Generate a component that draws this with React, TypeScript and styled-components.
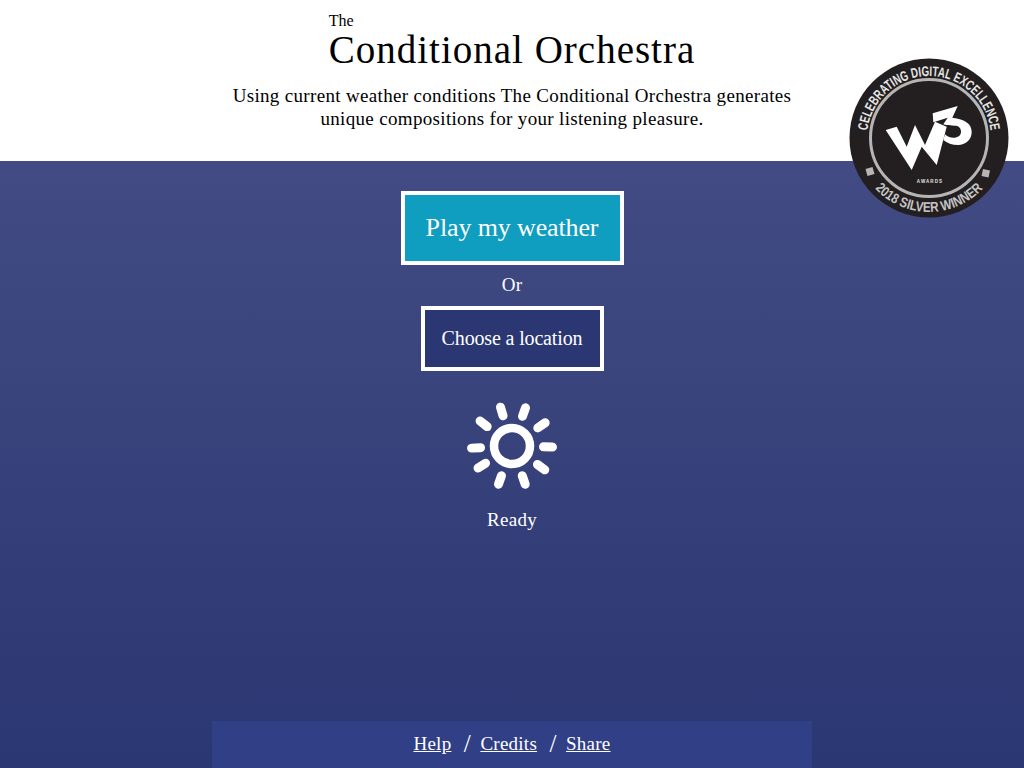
import React from "react";
import styled, { createGlobalStyle } from "styled-components";

const Global = createGlobalStyle`
  html, body { margin: 0; padding: 0; height: 100%; overflow: hidden; }
  body { font-family: "Liberation Serif", "DejaVu Serif", serif; }
`;
const Page = styled.div`
  position: relative;
  width: 1024px;
  height: 768px;
  display: flex;
  flex-direction: column;
  overflow: hidden;
  background: #fff;
`;
const Header = styled.header`
  height: 161px;
  box-sizing: border-box;
  padding-top: 11px;
  display: flex;
  flex-direction: column;
  align-items: center;
  color: #000;
`;
const TitleBlock = styled.h1`
  margin: 0;
  font-weight: 400;
  display: flex;
  flex-direction: column;
`;
const The = styled.span`
  font-size: 16px;
  line-height: 19px;
`;
const Name = styled.span`
  font-size: 39px;
  line-height: 39px;
  letter-spacing: 1px;
`;
const Intro = styled.p`
  margin: 15px 0 0;
  width: 600px;
  text-align: center;
  font-size: 19px;
  line-height: 23px;
  letter-spacing: 0.33px;
`;
const Main = styled.main`
  flex: 1;
  display: flex;
  flex-direction: column;
  align-items: center;
  padding-top: 30px;
  color: #fff;
  background: linear-gradient(#424b83, #2b3772);
`;
const Button = styled.button<{ $primary?: boolean }>`
  box-sizing: border-box;
  border: 4px solid #fff;
  border-radius: 0;
  color: #fff;
  font-family: inherit;
  background: ${(p) => (p.$primary ? "#0f9dc0" : "#2b3772")};
  width: ${(p) => (p.$primary ? "223px" : "183px")};
  height: ${(p) => (p.$primary ? "74px" : "65px")};
  font-size: ${(p) => (p.$primary ? "26px" : "20px")};
  letter-spacing: ${(p) => (p.$primary ? "-0.13px" : "-0.15px")};
  padding: 0;
`;
const Label = styled.div<{ $top: number }>`
  margin-top: ${(p) => p.$top}px;
  font-size: 19px;
  line-height: 24px;
  letter-spacing: 0.3px;
`;
const OrLabel = styled(Label)`
  margin-bottom: 9px;
`;
const WeatherIcon = styled.svg`
  display: block;
  margin-top: 29px;
`;
const Footer = styled.footer`
  margin-top: auto;
  width: 600px;
  height: 47px;
  box-sizing: border-box;
  padding-bottom: 2px;
  background: #303f86;
  display: flex;
  justify-content: center;
  align-items: center;
  font-size: 19px;
  letter-spacing: 0.25px;
`;
const FooterLink = styled.a`
  color: #fff;
  text-decoration: underline;
`;
const Slash = styled.span`
  margin: 0 8px 0 11px;
  width: 10px;
  font-size: 25px;
  line-height: 24px;
  text-align: center;
`;
const Badge = styled.svg`
  position: absolute;
  left: 849px;
  top: 58px;
`;

function Sun() {
  const angles = [-16.5, 19.5, 55, 91.5, 126, 161, 199.5, 237, 267, 308];
  return (
    <WeatherIcon width="92" height="92" viewBox="-46 -46 92 92">
      <circle cx="0" cy="0" r="18" fill="none" stroke="#fff" strokeWidth="8.5" />
      {angles.map((a) => (
        <line key={a} x1="0" y1="-40.5" x2="0" y2="-31.5" stroke="#fff" strokeWidth="9" strokeLinecap="round" transform={`rotate(${a})`} />
      ))}
    </WeatherIcon>
  );
}

function W3Badge() {
  return (
    <Badge width="160" height="160" viewBox="0 0 160 160">
      <defs>
        <path id="arcTop" d="M 80 142 a 62 62 0 1 1 0 -124 a 62 62 0 1 1 0 124" />
        <path id="arcBottom" d="M 6 80 a 74 74 0 0 0 148 0" />
      </defs>
      <circle cx="80" cy="80" r="79.5" fill="#231f20" />
      <circle cx="80" cy="80" r="58.5" fill="none" stroke="#b5b5b5" strokeWidth="3" />
      <text fontFamily="'Liberation Sans', sans-serif" fontSize="14" fontWeight="700" fill="#e6e6e6">
        <textPath href="#arcTop" startOffset="50%" textAnchor="middle" textLength="180" lengthAdjust="spacingAndGlyphs">CELEBRATING DIGITAL EXCELLENCE</textPath>
      </text>
      <text fontFamily="'Liberation Sans', sans-serif" fontSize="14" fontWeight="700" fill="#c4c4c4">
        <textPath href="#arcBottom" startOffset="50%" textAnchor="middle" textLength="121" lengthAdjust="spacingAndGlyphs">2018 SILVER WINNER</textPath>
      </text>
      <path fill="#b5b5b5" d="M16.500 111l7-2 2 7-7 2zM134 111l7 1.500-1.500 7-7-1.500z" />
      <path fill="#fff" d="M36.700 72L47.700 68.700 57.700 88.700 66 67 76 87 86 63.700 97.700 68.700 87.700 107 72.700 88.700 62.700 112z" />
      <path fill="#fff" d="M83.700 55.300L108.700 48 103.300 59.700C116 61 122.700 66 122.700 74 122.700 82 116 87 109.300 87 103 87 98 85 94.300 82L96 76.300C98 78.500 101 79.700 104.300 79.700 109 79.700 112 77.500 112 73.700 112 69.500 109 67.700 106 67.700 102 67.700 98 67.500 94.300 66.300L98.700 59.700 84.300 64.300z" />
      <text x="81" y="125" textAnchor="middle" fontFamily="'Liberation Sans', sans-serif" fontSize="4.500" fontWeight="700" fill="#e6e6e6" letterSpacing="1.1">AWARDS</text>
    </Badge>
  );
}

export default function App() {
  return (
    <Page>
      <Global />
      <Header>
        <TitleBlock>
          <The>The</The>
          <Name>Conditional Orchestra</Name>
        </TitleBlock>
        <Intro>
          Using current weather conditions The Conditional Orchestra generates unique compositions for your listening pleasure.
        </Intro>
      </Header>
      <Main>
        <Button $primary>Play my weather</Button>
        <OrLabel $top={8}>Or</OrLabel>
        <Button>Choose a location</Button>
        <Sun />
        <Label $top={16}>Ready</Label>
        <Footer>
          <FooterLink href="#">Help</FooterLink>
          <Slash>/</Slash>
          <FooterLink href="#">Credits</FooterLink>
          <Slash>/</Slash>
          <FooterLink href="#">Share</FooterLink>
        </Footer>
      </Main>
      <W3Badge />
    </Page>
  );
}
